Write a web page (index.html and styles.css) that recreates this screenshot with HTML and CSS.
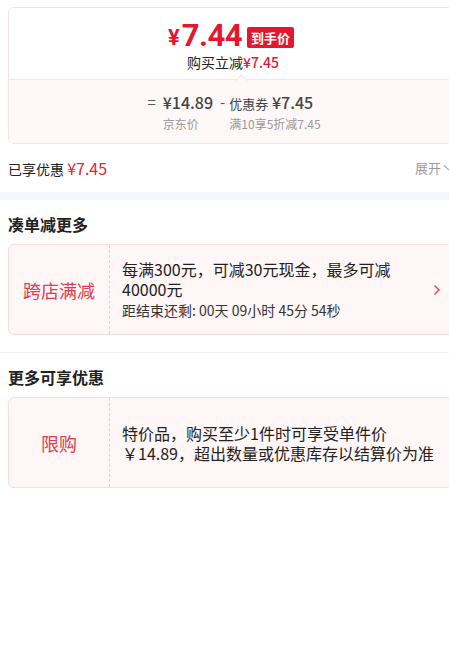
FILE: index.html
```html
<!DOCTYPE html>
<html lang="zh-CN">
<head>
<meta charset="utf-8">
<title>优惠明细</title>
<link rel="stylesheet" href="styles.css">
</head>
<body>
<div class="page">
  <div class="wrap top-wrap">
    <div class="price-card">
      <div class="pc-top">
        <div class="final">
          <span class="yen">¥</span><span class="num">7.44</span><span class="badge">到手价</span>
        </div>
        <div class="cut">购买立减<span class="red">¥7.45</span></div>
      </div>
      <div class="pc-bottom">
        <div class="formula">
          <span class="op">=</span>
          <div class="term">
            <div class="tv">¥14.89</div>
            <div class="tl">京东价</div>
          </div>
          <span class="op">-</span>
          <div class="term term-coupon">
            <div class="tv"><span class="tv-small">优惠券</span> ¥7.45</div>
            <div class="tl">满10享5折减7.45</div>
          </div>
        </div>
      </div>
    </div>
    <div class="enjoy-row">
      <div class="enjoy">已享优惠 <span class="enjoy-val">¥7.45</span></div>
      <div class="expand">展开
        <svg class="expand-ico" width="12" height="8" viewBox="0 0 12 8"><path d="M1 1.5 L6 6 L11 1.5" fill="none" stroke="#aaa" stroke-width="1.2"/></svg>
      </div>
    </div>
  </div>
  <div class="band"></div>
  <div class="wrap">
    <h2 class="sec-title">凑单减更多</h2>
    <div class="promo">
      <div class="promo-label">跨店满减</div>
      <div class="promo-body">
        <div class="promo-text">每满300元，可减30元现金，最多可减40000元</div>
        <div class="promo-sub">距结束还剩: 00天 09小时 45分 54秒</div>
      </div>
      <svg class="promo-arrow" width="8" height="12" viewBox="0 0 8 12"><path d="M1.5 1.5 L6 6 L1.5 10.5" fill="none" stroke="#e23a4e" stroke-width="1.4"/></svg>
    </div>
  </div>
  <div class="rule"></div>
  <div class="wrap">
    <h2 class="sec-title">更多可享优惠</h2>
    <div class="promo">
      <div class="promo-label">限购</div>
      <div class="promo-body promo-body-wide">
        <div class="promo-text">特价品，购买至少1件时可享受单件价￥14.89，超出数量或优惠库存以结算价为准</div>
      </div>
    </div>
  </div>
</div>
</body>
</html>
```

FILE: styles.css
```css
html, body {
  margin: 0;
  padding: 0;
  background: #fff;
  overflow-x: hidden;
}
body {
  font-family: "Noto Sans CJK SC", "Noto Sans", sans-serif;
  color: #222;
}
.page {
  width: 466px;
}
.wrap {
  padding: 0 8px;
}
.top-wrap {
  padding-top: 7px;
}
.price-card {
  border: 1px solid #f3e3e5;
  border-radius: 6px;
  overflow: hidden;
}
.pc-top {
  position: relative;
  height: 72px;
  box-sizing: border-box;
  padding: 13px 0 0;
  display: flex;
  flex-direction: column;
  align-items: center;
  background: #fff;
  border-bottom: 1px solid #f6e4e6;
}
.pc-top::after {
  content: "";
  position: absolute;
  left: 228px;
  bottom: -1px;
  width: 8px;
  height: 8px;
  background: #fff8f8;
  border-left: 1px solid #f6e4e6;
  border-top: 1px solid #f6e4e6;
  transform: translateY(5px) rotate(45deg);
}
.final {
  display: flex;
  align-items: center;
  height: 30px;
  color: #e5172f;
  font-family: Roboto, "Noto Sans CJK SC", sans-serif;
  font-weight: 700;
  margin-left: -4px;
}
.yen {
  font-size: 22px;
  line-height: 24px;
  margin-right: 2px;
  margin-top: 3px;
}
.num {
  font-size: 31px;
  letter-spacing: -0.5px;
  line-height: 30px;
}
.badge {
  margin-left: 5px;
  margin-top: 3px;
  background: #e5172f;
  color: #fff;
  font-family: "Noto Sans CJK SC", sans-serif;
  font-size: 13px;
  font-weight: 700;
  line-height: 21px;
  height: 21px;
  padding: 0 4px;
  border-radius: 2px;
}
.cut {
  font-size: 14px;
  line-height: 20px;
  height: 20px;
  color: #222;
  margin-top: 1px;
}
.red {
  color: #e5172f;
  font-weight: 500;
}
.pc-bottom {
  background: #fff8f8;
  height: 63px;
  box-sizing: border-box;
  padding: 11px 0 0;
  display: flex;
  justify-content: center;
}
.formula {
  display: flex;
  align-items: flex-start;
  gap: 7px;
  margin-left: 2px;
  color: #444;
}
.op {
  font-size: 15px;
  line-height: 22px;
  height: 22px;
  color: #555;
}
.term {
  display: flex;
  flex-direction: column;
}
.term-coupon {
  margin-left: -3px;
}
.tv {
  font-size: 16px;
  line-height: 22px;
  height: 22px;
  font-weight: 500;
  color: #444;
}
.tv-small {
  font-size: 13px;
  font-weight: 400;
}
.tl {
  font-size: 12px;
  line-height: 18px;
  height: 18px;
  color: #999;
  margin-top: 2px;
}
.enjoy-row {
  height: 48px;
  display: flex;
  align-items: center;
  justify-content: space-between;
}
.enjoy {
  font-size: 14px;
  line-height: 20px;
  color: #222;
}
.enjoy-val {
  color: #e2233b;
  font-size: 16px;
}
.expand {
  display: flex;
  align-items: center;
  gap: 2px;
  font-size: 13px;
  line-height: 20px;
  color: #999;
  margin-right: 3px;
}
.band {
  height: 8px;
  background: #f5f6fa;
}
.sec-title {
  margin: 0;
  padding: 12px 0 8px;
  height: 24px;
  font-size: 16px;
  line-height: 24px;
  font-weight: 700;
  color: #222;
}
.promo {
  display: flex;
  align-items: stretch;
  height: 89px;
  border: 1px solid #f5dde1;
  border-radius: 6px;
  background: #fff6f7;
}
.promo-label {
  width: 100px;
  flex: none;
  display: flex;
  align-items: center;
  justify-content: center;
  border-right: 1px dashed #f0c9cf;
  font-size: 18px;
  color: #e23a4e;
}
.promo-body {
  flex: 1;
  padding: 0 12px;
  display: flex;
  flex-direction: column;
  justify-content: center;
  min-width: 0;
}
.promo-body-wide {
  padding-right: 12px;
}
.promo-text {
  font-size: 16px;
  line-height: 20px;
  color: #222;
}
.promo-sub {
  font-size: 14px;
  line-height: 20px;
  color: #333;
  margin-top: 1px;
}
.promo-arrow {
  flex: none;
  align-self: center;
  margin: 0 16px 0 4px;
}
.rule {
  height: 1px;
  background: #f0f0f0;
  margin-top: 17px;
}
```
